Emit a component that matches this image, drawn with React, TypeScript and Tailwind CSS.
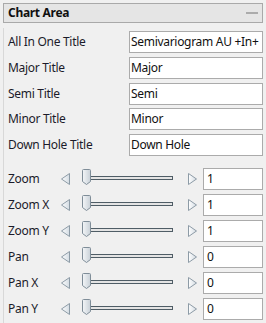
import React from "react";

const textRows = [
  { label: "All In One Title", value: "Semivariogram AU +In+" },
  { label: "Major Title", value: "Major" },
  { label: "Semi Title", value: "Semi" },
  { label: "Minor Title", value: "Minor" },
  { label: "Down Hole Title", value: "Down Hole" },
];

const sliderRows = [
  { label: "Zoom", value: "1" },
  { label: "Zoom X", value: "1" },
  { label: "Zoom Y", value: "1" },
  { label: "Pan", value: "0" },
  { label: "Pan X", value: "0" },
  { label: "Pan Y", value: "0" },
];

function Arrow({ dir }: { dir: "left" | "right" }) {
  const pts = dir === "left" ? "8.5,0.5 0.5,6 8.5,11.5" : "0.5,0.5 8.5,6 0.5,11.5";
  return (
    <svg width="9" height="12" viewBox="0 0 9 12" className="shrink-0">
      <defs>
        <linearGradient id={`g-${dir}`} x1="0" y1="0" x2="1" y2="0">
          <stop offset="0" stopColor="#ffffff" />
          <stop offset="1" stopColor="#d3dbe2" />
        </linearGradient>
      </defs>
      <polygon points={pts} fill={`url(#g-${dir})`} stroke="#8d9ba6" strokeWidth="1" />
    </svg>
  );
}

function Thumb() {
  return (
    <svg width="9" height="16" viewBox="0 0 9 16" className="absolute left-0 top-[1px]">
      <defs>
        <linearGradient id="thumb" x1="0" y1="0" x2="1" y2="0">
          <stop offset="0" stopColor="#f4f6f8" />
          <stop offset="1" stopColor="#c9d1d8" />
        </linearGradient>
      </defs>
      <path
        d="M1.5 0.5 H7.5 Q8.5 0.5 8.5 1.5 V12.5 L4.5 15.5 L0.5 12.5 V1.5 Q0.5 0.5 1.5 0.5 Z"
        fill="url(#thumb)"
        stroke="#7f8d98"
      />
    </svg>
  );
}

export default function App() {
  return (
    <div className="w-[266px] h-[323px] bg-[#f0f0f0] pt-[3px] px-[3px] overflow-hidden font-['Noto_Sans',sans-serif] text-[12px] tracking-[-0.3px] text-[#1b1b2a]">
      <div className="h-[20px] border border-[#a9a9a9] bg-[#e5e5e5] flex items-center justify-between pl-[4px] pr-[4px]">
        <span className="font-bold text-[12px] text-[#111]">Chart Area</span>
        <span className="w-[12px] h-[2px] bg-[#ababab]" />
      </div>

      <div className="mt-[5px] pt-[3px] border-l border-[#d8d8d8] h-[300px]">
        <div className="flex flex-col gap-[3.75px]">
          {textRows.map((r) => (
            <div key={r.label} className="flex items-center h-[22px]">
              <span className="w-[125px] pl-[4px] shrink-0 whitespace-nowrap">{r.label}</span>
              <div className="w-[134px] h-[22px] border border-[#ababab] bg-white flex items-center pl-[1px] whitespace-nowrap overflow-hidden text-[#111]">
                {r.value}
              </div>
            </div>
          ))}
        </div>

        <div className="flex flex-col gap-[4px] mt-[12px]">
          {sliderRows.map((r) => (
            <div key={r.label} className="flex items-center h-[22px]">
              <span className="w-[57px] pl-[4px] shrink-0 whitespace-nowrap">{r.label}</span>
              <Arrow dir="left" />
              <div className="relative ml-[12px] w-[91px] h-[22px] shrink-0">
                <div className="absolute left-[5px] right-0 top-[8px] h-[4px] border border-[#4f5d66] bg-[#e4e4e4]" />
                <Thumb />
              </div>
              <span className="ml-[15px]">
                <Arrow dir="right" />
              </span>
              <div className="ml-[6px] w-[60px] h-[22px] border border-[#ababab] bg-white flex items-center pl-[3px] text-[#111]">
                {r.value}
              </div>
            </div>
          ))}
        </div>
      </div>
    </div>
  );
}
